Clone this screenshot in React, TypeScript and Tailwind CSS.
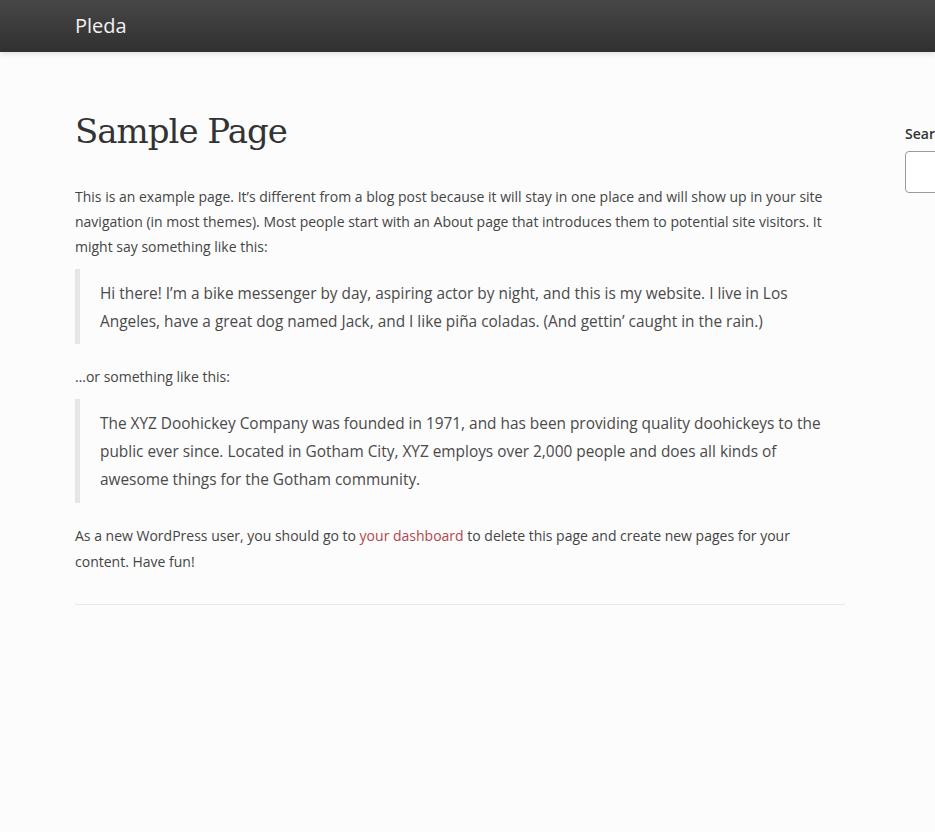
import React from "react";

export default function App() {
  return (
    <div className="min-h-[832px] w-full overflow-x-hidden bg-[#fcfcfc]" style={{ fontFamily: '"Open Sans", "Liberation Sans", sans-serif' }}>
      <header className="h-[52px] bg-gradient-to-b from-[#474747] to-[#303030] shadow-[0_2px_6px_rgba(0,0,0,0.12)] flex items-center">
        <div className="pl-[75px] text-[20px] text-[#f2f2f2] leading-none">Pleda</div>
      </header>
      <div className="flex pl-[75px] w-[1300px]">
        <main className="w-[770px] shrink-0">
          <h1 className="mt-[57px] text-[34px] leading-[44px] tracking-[-1px] text-[#333]" style={{ fontFamily: '"DejaVu Serif", "Liberation Serif", serif' }}>
            Sample Page
          </h1>
          <p className="mt-[31px] text-[14px] leading-[25px] text-[#444]">
            This is an example page. It’s different from a blog post because it will stay in one place and will show up in your site navigation (in most themes). Most people start with an About page that introduces them to potential site visitors. It might say something like this:
          </p>
          <blockquote className="mt-[10px] border-l-[5px] border-[#e6e6e6] pl-[20px] pt-[11px] pb-[9px] text-[15.4px] leading-[27.7px] text-[#4a4a4a]">
            Hi there! I’m a bike messenger by day, aspiring actor by night, and this is my website. I live in Los Angeles, have a great dog named Jack, and I like piña coladas. (And gettin’ caught in the rain.)
          </blockquote>
          <p className="mt-[20px] text-[14px] leading-[25px] text-[#444]">…or something like this:</p>
          <blockquote className="mt-[10px] border-l-[5px] border-[#e6e6e6] pl-[20px] pt-[11px] pb-[9px] text-[15.4px] leading-[27.7px] text-[#4a4a4a]">
            The XYZ Doohickey Company was founded in 1971, and has been providing quality doohickeys to the public ever since. Located in Gotham City, XYZ employs over 2,000 people and does all kinds of awesome things for the Gotham community.
          </blockquote>
          <p className="mt-[20px] text-[14px] leading-[26px] text-[#444]">
            As a new WordPress user, you should go to <a className="text-[#b0474c]" href="#">your dashboard</a> to delete this page and create new pages for your content. Have fun!
          </p>
          <hr className="mt-[29px] border-0 border-t border-[#e8e8e8]" />
        </main>
        <aside className="ml-[60px] w-[270px] shrink-0 pt-[72px]">
          <label className="block text-[14px] font-semibold text-[#333] leading-[20px]">Search</label>
          <div className="mt-[7px] h-[42px] w-[260px] rounded-[4px] border border-[#9a9a9a] bg-white" />
        </aside>
      </div>
    </div>
  );
}
